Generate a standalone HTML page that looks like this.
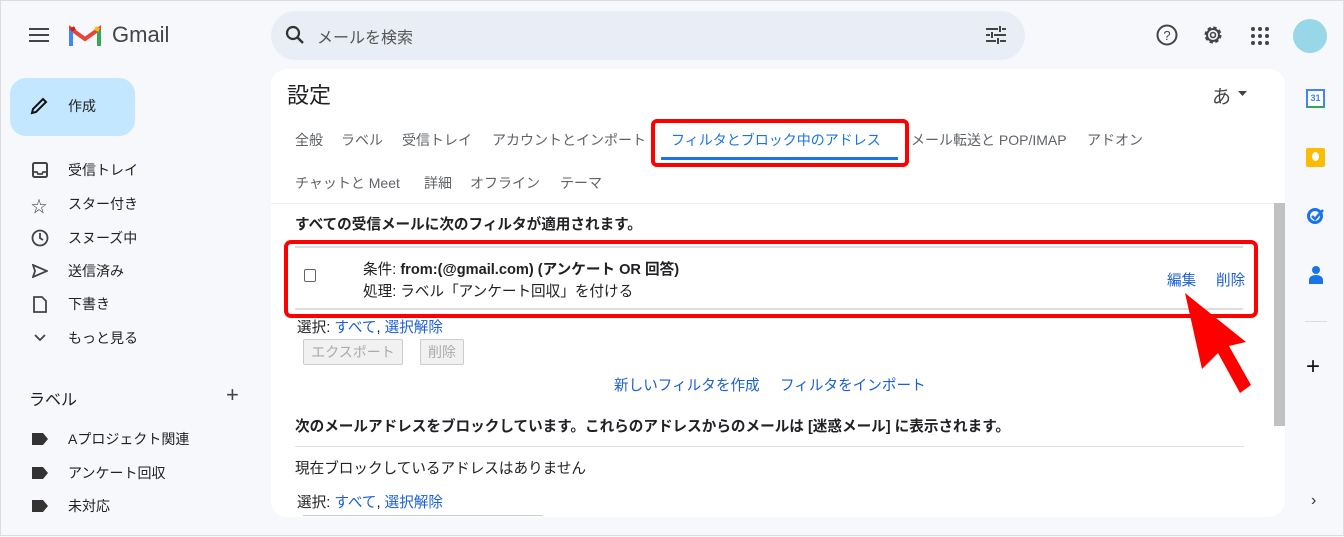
<!DOCTYPE html>
<html><head><meta charset="utf-8"><style>
*{margin:0;padding:0;box-sizing:border-box}
body{width:1344px;height:536px;overflow:hidden;background:#f6f8fc;font-family:"Liberation Sans","Noto Sans CJK JP",sans-serif;color:#202124;position:relative;border:1px solid #dadce0}
.a{position:absolute;white-space:nowrap}
.nav{font-size:14px;color:#202124}
.tab{font-size:14px;color:#5f6368}
.lk{color:#1a5fd6}
.bk{font-size:14.6px}
</style></head><body>
<svg class="a" style="left:28px;top:26px" width="20" height="16"><path d="M0 2h20M0 8h20M0 14h20" stroke="#444" stroke-width="2"/></svg>
<svg class="a" style="left:68px;top:23px" width="32" height="24" viewBox="0 0 32 24"><path d="M2 22V5l14 10L30 5v17" fill="none" stroke="#ea4335" stroke-width="4"/><path d="M2 22V6" stroke="#4285f4" stroke-width="4"/><path d="M30 22V6" stroke="#34a853" stroke-width="4"/><path d="M26 4l4 2" stroke="#fbbc04" stroke-width="4"/><path d="M2 6l4-2" stroke="#c5221f" stroke-width="4"/></svg>
<div class="a" style="left:111px;top:21px;font-size:22px;color:#444">Gmail</div>
<div class="a" style="left:270px;top:10px;width:754px;height:49px;border-radius:25px;background:#e9eef6"></div>
<svg class="a" style="left:284px;top:24px" width="20" height="20"><circle cx="8" cy="8" r="6" fill="none" stroke="#333" stroke-width="2.2"/><path d="M12 12l6 6" stroke="#333" stroke-width="2.5"/></svg>
<div class="a" style="left:316px;top:23px;font-size:16px;color:#555">メールを検索</div>
<svg class="a" style="left:985px;top:25px" width="20" height="18"><path d="M0 3h12M16 3h4M0 9h4M8 9h12M0 15h10M14 15h6M14 0v6M6 6v6M12 12v6" stroke="#444" stroke-width="2"/></svg>
<svg class="a" style="left:1155px;top:23px" width="22" height="22"><circle cx="11" cy="11" r="9.5" fill="none" stroke="#444" stroke-width="2"/><text x="11" y="16" font-size="13" text-anchor="middle" fill="#444" font-family="Liberation Sans">?</text></svg>
<svg class="a" style="left:1201px;top:23px" width="22" height="22"><circle cx="11" cy="11" r="7" fill="none" stroke="#444" stroke-width="3" stroke-dasharray="3.2 2.3"/><circle cx="11" cy="11" r="6" fill="none" stroke="#444" stroke-width="2"/><circle cx="11" cy="11" r="2.5" fill="none" stroke="#444" stroke-width="1.6"/></svg>
<svg class="a" style="left:1250px;top:26px" width="18" height="18" fill="#444"><circle cx="2" cy="2" r="2"/><circle cx="9" cy="2" r="2"/><circle cx="16" cy="2" r="2"/><circle cx="2" cy="9" r="2"/><circle cx="9" cy="9" r="2"/><circle cx="16" cy="9" r="2"/><circle cx="2" cy="16" r="2"/><circle cx="9" cy="16" r="2"/><circle cx="16" cy="16" r="2"/></svg>
<div class="a" style="left:1292px;top:18px;width:34px;height:34px;border-radius:50%;background:#97d7e8"></div>
<div class="a" style="left:9px;top:77px;width:125px;height:58px;border-radius:16px;background:#c2e7ff"></div>
<svg class="a" style="left:28px;top:95px" width="20" height="20"><path d="M3 17l1-4L14 3l3 3L7 16z" fill="none" stroke="#111" stroke-width="2"/></svg>
<div class="a nav" style="left:67px;top:95px">作成</div>
<svg class="a" style="left:31px;top:161px" width="16" height="16"><rect x="1" y="1" width="14" height="14" rx="1.5" fill="none" stroke="#444" stroke-width="2"/><path d="M1 10h4l1 2h4l1-2h4" fill="none" stroke="#444" stroke-width="1.8"/></svg>
<div class="a nav" style="left:67px;top:159px">受信トレイ</div>
<div class="a" style="left:30px;top:192px;font-size:16px;color:#444">☆</div>
<div class="a nav" style="left:67px;top:193px">スター付き</div>
<svg class="a" style="left:30px;top:228px" width="18" height="18"><circle cx="9" cy="9" r="7.5" fill="none" stroke="#444" stroke-width="1.8"/><path d="M9 4v5l3 2" fill="none" stroke="#444" stroke-width="1.8"/></svg>
<div class="a nav" style="left:67px;top:227px">スヌーズ中</div>
<svg class="a" style="left:31px;top:263px" width="16" height="14"><path d="M1 1l14 6-14 6 2-6z" fill="none" stroke="#444" stroke-width="1.8"/></svg>
<div class="a nav" style="left:67px;top:260px">送信済み</div>
<svg class="a" style="left:32px;top:295px" width="14" height="17"><path d="M1 1h8l4 4v11H1z" fill="none" stroke="#444" stroke-width="1.8"/></svg>
<div class="a nav" style="left:67px;top:293px">下書き</div>
<svg class="a" style="left:33px;top:333px" width="12" height="8"><path d="M1 1l5 5 5-5" fill="none" stroke="#444" stroke-width="1.8"/></svg>
<div class="a nav" style="left:67px;top:327px">もっと見る</div>
<div class="a" style="left:28px;top:385px;font-size:16px;color:#202124">ラベル</div>
<div class="a" style="left:225px;top:381px;font-size:22px;color:#444">+</div>
<svg class="a" style="left:31px;top:432px" width="16" height="12"><path d="M0 0h11l5 6-5 6H0z" fill="#333"/></svg>
<div class="a nav" style="left:67px;top:428px">Aプロジェクト関連</div>
<svg class="a" style="left:31px;top:466px" width="16" height="12"><path d="M0 0h11l5 6-5 6H0z" fill="#333"/></svg>
<div class="a nav" style="left:67px;top:462px">アンケート回収</div>
<svg class="a" style="left:31px;top:499px" width="16" height="12"><path d="M0 0h11l5 6-5 6H0z" fill="#333"/></svg>
<div class="a nav" style="left:67px;top:495px">未対応</div>
<div class="a" style="left:1305px;top:88px;width:19px;height:19px;border:2px solid #4285f4;border-bottom-color:#34a853;background:#fff;font-size:9px;color:#4285f4;text-align:center;line-height:15px;font-weight:bold">31</div>
<div class="a" style="left:1305px;top:147px;width:19px;height:19px;border-radius:2px;background:#fbbc04"></div>
<div class="a" style="left:1311px;top:151px;width:7px;height:9px;border-radius:50%;background:#fff"></div>
<svg class="a" style="left:1305px;top:204px" width="20" height="20"><circle cx="9" cy="11" r="6.5" fill="none" stroke="#1a73e8" stroke-width="3"/><path d="M6 11l3 3 8-9" fill="none" stroke="#1a73e8" stroke-width="2.5"/></svg>
<svg class="a" style="left:1306px;top:264px" width="18" height="20" fill="#1a73e8"><circle cx="9" cy="5" r="4"/><path d="M2 19v-4c0-3 3-5 7-5s7 2 7 5v4z"/></svg>
<div class="a" style="left:1304px;top:320px;width:22px;height:1px;background:#dadce0"></div>
<div class="a" style="left:1305px;top:352px;font-size:24px;color:#111">+</div>
<div class="a" style="left:1310px;top:491px;font-size:16px;color:#333">›</div>
<div class="a" style="left:270px;top:68px;width:1014px;height:448px;background:#fff;border-radius:16px"></div>
<div class="a" style="left:286px;top:77px;font-size:22px">設定</div>
<div class="a" style="left:1211px;top:81px;font-size:19px;color:#444">あ</div>
<svg class="a" style="left:1237px;top:90px" width="9" height="5"><path d="M0 0h9L4.5 5z" fill="#444"/></svg>
<div class="a tab" style="left:294px;top:129px">全般</div>
<div class="a tab" style="left:340px;top:129px">ラベル</div>
<div class="a tab" style="left:401px;top:129px">受信トレイ</div>
<div class="a tab" style="left:491px;top:129px">アカウントとインポート</div>
<div class="a tab" style="left:670px;top:129px;color:#1a73e8">フィルタとブロック中のアドレス</div>
<div class="a" style="left:660px;top:156px;width:237px;height:3px;background:#1a73e8"></div>
<div class="a" style="left:650px;top:118px;width:258px;height:48px;border:4px solid #f00;border-radius:6px"></div>
<div class="a tab" style="left:910px;top:129px">メール転送と POP/IMAP</div>
<div class="a tab" style="left:1086px;top:129px">アドオン</div>
<div class="a tab" style="left:294px;top:172px">チャットと Meet</div>
<div class="a tab" style="left:423px;top:172px">詳細</div>
<div class="a tab" style="left:469px;top:172px">オフライン</div>
<div class="a tab" style="left:559px;top:172px">テーマ</div>
<div class="a" style="left:270px;top:202px;width:1003px;height:1px;background:#eee"></div>
<div class="a" style="left:1273px;top:202px;width:11px;height:223px;background:#c1c1c1"></div>
<div class="a bk" style="left:294px;top:212px;font-weight:bold">すべての受信メールに次のフィルタが適用されます。</div>
<div class="a" style="left:294px;top:245px;width:948px;height:64px;border-top:2px solid #ddd;border-bottom:2px solid #ddd"></div>
<div class="a" style="left:303px;top:268px;width:12px;height:13px;border:1.5px solid #666;border-radius:2px"></div>
<div class="a bk" style="left:362px;top:257px">条件: <b>from:(@gmail.com) (アンケート OR 回答)</b></div>
<div class="a bk" style="left:362px;top:279px">処理: ラベル「アンケート回収」を付ける</div>
<div class="a bk lk" style="left:1166px;top:268px">編集</div>
<div class="a bk lk" style="left:1215px;top:268px">削除</div>
<div class="a" style="left:283px;top:239px;width:974px;height:78px;border:4px solid #f00;border-radius:7px"></div>
<div class="a bk" style="left:296px;top:315px">選択: <span class="lk">すべて</span>, <span class="lk">選択解除</span></div>
<div class="a" style="left:302px;top:338px;width:100px;height:26px;border:1px solid #ccc;background:#f1f1f1;border-radius:2px;font-size:14px;color:#aaa;text-align:center;line-height:24px">エクスポート</div>
<div class="a" style="left:419px;top:338px;width:44px;height:26px;border:1px solid #ccc;background:#f1f1f1;border-radius:2px;font-size:14px;color:#aaa;text-align:center;line-height:24px">削除</div>
<div class="a bk lk" style="left:613px;top:373px">新しいフィルタを作成</div>
<div class="a bk lk" style="left:779px;top:373px">フィルタをインポート</div>
<div class="a bk" style="left:294px;top:414px;font-weight:bold">次のメールアドレスをブロックしています。これらのアドレスからのメールは [迷惑メール] に表示されます。</div>
<div class="a" style="left:294px;top:445px;width:949px;height:1px;background:#e0e0e0"></div>
<div class="a bk" style="left:294px;top:456px">現在ブロックしているアドレスはありません</div>
<div class="a bk" style="left:296px;top:490px">選択: <span class="lk">すべて</span>, <span class="lk">選択解除</span></div>
<div class="a" style="left:302px;top:514px;width:240px;height:1px;background:#ccc"></div>
<svg class="a" style="left:0;top:0" width="1344" height="536"><polygon points="1184,292 1201,368 1217,352 1239,392 1250,384 1228,345 1245,341" fill="#f00"/></svg>
</body></html>
